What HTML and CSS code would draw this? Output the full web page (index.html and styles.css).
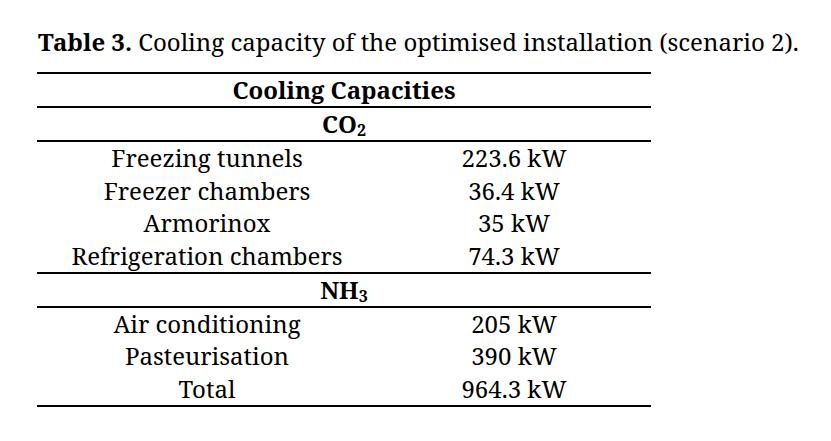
FILE: index.html
```html
<!DOCTYPE html>
<html lang="en">
<head>
<meta charset="utf-8">
<title>Table 3</title>
<link rel="stylesheet" href="styles.css">
</head>
<body>
<p class="caption"><b>Table 3.</b> Cooling capacity of the optimised installation (scenario 2).</p>
<div class="tbl">
  <div class="head top">Cooling Capacities</div>
  <div class="head">CO<sub>2</sub></div>
  <div class="group g1">
    <div class="row"><span class="c1">Freezing tunnels</span><span class="c2">223.6 kW</span></div>
    <div class="row"><span class="c1">Freezer chambers</span><span class="c2">36.4 kW</span></div>
    <div class="row"><span class="c1">Armorinox</span><span class="c2">35 kW</span></div>
    <div class="row"><span class="c1">Refrigeration chambers</span><span class="c2">74.3 kW</span></div>
  </div>
  <div class="head">NH<sub>3</sub></div>
  <div class="group g2">
    <div class="row"><span class="c1">Air conditioning</span><span class="c2">205 kW</span></div>
    <div class="row"><span class="c1">Pasteurisation</span><span class="c2">390 kW</span></div>
    <div class="row"><span class="c1">Total</span><span class="c2">964.3 kW</span></div>
  </div>
</div>
</body>
</html>
```
FILE: styles.css
```css
html, body {
  margin: 0;
  padding: 0;
  background: #fff;
}
body {
  font-family: "Noto Serif", "DejaVu Serif", serif;
  font-size: 24px;
  color: #000;
  padding: 26px 0 0 38px;
}
.caption {
  margin: 0;
  line-height: 32px;
  white-space: nowrap;
}
.tbl {
  width: 614px;
  margin: 14px 0 0 -1px;
  display: flex;
  flex-direction: column;
}
.head {
  height: 32px;
  line-height: 32px;
  text-align: center;
  font-weight: bold;
  border-bottom: 2px solid #000;
}
.head.top {
  border-top: 2px solid #000;
}
.head sub {
  font-size: 16px;
  line-height: 0;
  vertical-align: -3px;
}
.group {
  border-bottom: 2px solid #000;
}
.row {
  display: flex;
  line-height: 32px;
}
.g1 .row {
  height: 32.5px;
}
.g2 .row {
  height: 32.33px;
}
.c1 {
  width: 340px;
  text-align: center;
}
.c2 {
  flex: 1;
  text-align: center;
}
```
